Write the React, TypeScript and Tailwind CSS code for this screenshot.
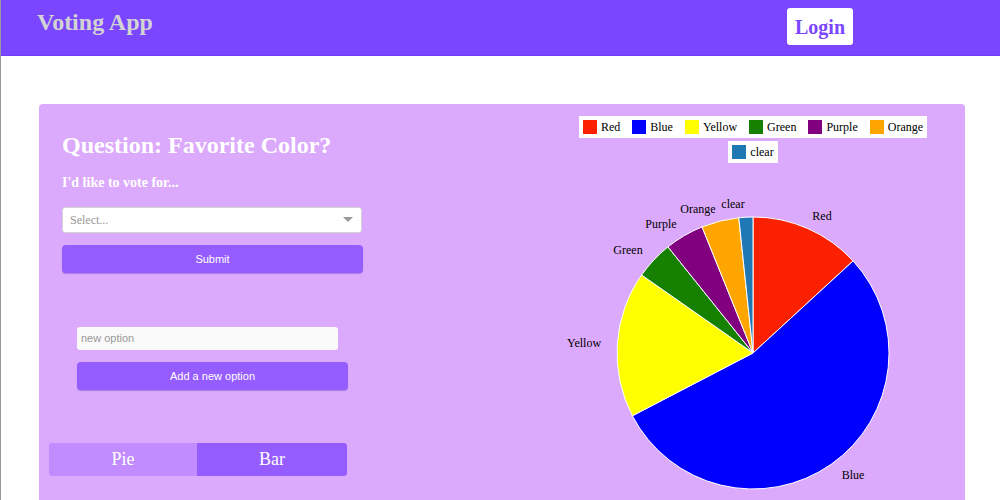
import React from "react";

const serif = { fontFamily: '"Liberation Serif", "Times New Roman", serif' };

const slices = [
  { label: "Red", color: "#fb2100", from: 0, to: 47.4, lx: 281, ly: 22 },
  { label: "Blue", color: "#0000ff", from: 47.4, to: 242.5, lx: 312, ly: 281 },
  { label: "Yellow", color: "#ffff00", from: 242.5, to: 305, lx: 43, ly: 149 },
  { label: "Green", color: "#168000", from: 305, to: 321.3, lx: 87, ly: 56 },
  { label: "Purple", color: "#800080", from: 321.3, to: 338, lx: 120, ly: 30 },
  { label: "Orange", color: "#ffa500", from: 338, to: 354, lx: 157, ly: 15 },
  { label: "clear", color: "#1f77b4", from: 354, to: 360, lx: 192, ly: 10 },
];

const CX = 212;
const CY = 158;
const R = 136;

const pt = (deg: number) => {
  const a = (deg * Math.PI) / 180;
  return [CX + R * Math.sin(a), CY - R * Math.cos(a)];
};

const arcPath = (from: number, to: number) => {
  const [x1, y1] = pt(from);
  const [x2, y2] = pt(to);
  const large = to - from > 180 ? 1 : 0;
  return `M${CX},${CY} L${x1},${y1} A${R},${R} 0 ${large} 1 ${x2},${y2} Z`;
};

const LegendItem = ({ color, label }: { color: string; label: string }) => (
  <div className="flex items-center gap-[4px]">
    <span className="w-[14px] h-[14px]" style={{ background: color }} />
    <span className="text-[12px] text-black leading-none">{label}</span>
  </div>
);

const App = () => {
  return (
    <div className="min-h-[500px] bg-white border-l border-[#9a9a9a]" style={serif}>
      {/* Header */}
      <div className="h-[56px] bg-[#7a46ff] border-b border-[#6f3ef0] flex items-start pl-[36px]">
        <div className="pt-[8px] text-[24px] leading-[28px] font-bold text-[#d3d3d3]">
          Voting App
        </div>
        <button className="ml-auto mr-[147px] mt-[8px] w-[66px] h-[37px] bg-white rounded-[3px] text-[20px] font-bold text-[#7a46ff]">
          Login
        </button>
      </div>

      {/* Poll card */}
      <div className="mt-[48px] ml-[38px] w-[926px] h-[420px] bg-[#dcaafc] rounded-[4px] grid grid-cols-[502px_424px]">
        {/* Left column */}
        <div className="flex flex-col">
          <div className="pl-[23px] pt-[27px]">
            <h1 className="text-[24px] leading-[28px] font-bold text-white">
              Question: Favorite Color?
            </h1>
            <p className="mt-[14px] text-[14px] leading-[20px] font-bold text-white">
              I'd like to vote for...
            </p>
            <div className="mt-[14px] w-[300px] h-[26px] bg-white rounded-[3px] border border-[#d4d4d4] flex items-center justify-between pl-[7px] pr-[8px]">
              <span className="text-[12px] text-[#999]">Select...</span>
              <svg width="10" height="6" viewBox="0 0 10 6">
                <path d="M0 0 L10 0 L5 5 Z" fill="#999" />
              </svg>
            </div>
            <button
              className="mt-[12px] w-[301px] h-[28px] bg-[#955cff] rounded-[4px] shadow-[0_1px_1px_rgba(80,40,160,0.35)] text-[11px] font-medium text-white"
              style={{ fontFamily: '"Liberation Sans", Arial, sans-serif' }}
            >
              Submit
            </button>
          </div>

          <div className="pl-[38px] mt-[54px]" style={{ fontFamily: '"Liberation Sans", Arial, sans-serif' }}>
            <div className="w-[261px] h-[23px] bg-[#fafafa] rounded-[3px] flex items-center pl-[4px] text-[11px] text-[#999]">
              new option
            </div>
            <button className="mt-[12px] w-[271px] h-[28px] bg-[#955cff] rounded-[4px] shadow-[0_1px_1px_rgba(80,40,160,0.35)] text-[11px] font-medium text-white">
              Add a new option
            </button>
          </div>

          <div className="ml-[10px] mt-[53px] w-[298px] h-[33px] flex rounded-[3px] overflow-hidden">
            <button className="w-[148px] bg-[#c08cff] text-[18px] text-white">Pie</button>
            <button className="flex-1 bg-[#955cff] text-[18px] text-white">Bar</button>
          </div>
        </div>

        {/* Right column: chart */}
        <div className="flex flex-col items-center pt-[12px]">
          <div className="flex flex-col items-center gap-[3px]">
            <div className="bg-white h-[22px] px-[4px] flex items-center gap-[12px]">
              {slices.slice(0, 6).map((s) => (
                <LegendItem key={s.label} color={s.color} label={s.label} />
              ))}
            </div>
            <div className="bg-white h-[22px] px-[4px] flex items-center">
              <LegendItem color={slices[6].color} label={slices[6].label} />
            </div>
          </div>
          <svg width="424" height="305" className="mt-[32px]" style={serif}>
            {slices.map((s) => (
              <path key={s.label} d={arcPath(s.from, s.to)} fill={s.color} stroke="#fff" strokeWidth="1" />
            ))}
            {slices.map((s) => (
              <text
                key={s.label + "-l"}
                x={s.lx}
                y={s.ly}
                textAnchor="middle"
                dominantBaseline="middle"
                fontSize="12"
                fill="#000"
              >
                {s.label}
              </text>
            ))}
          </svg>
        </div>
      </div>
    </div>
  );
};

export default App;
